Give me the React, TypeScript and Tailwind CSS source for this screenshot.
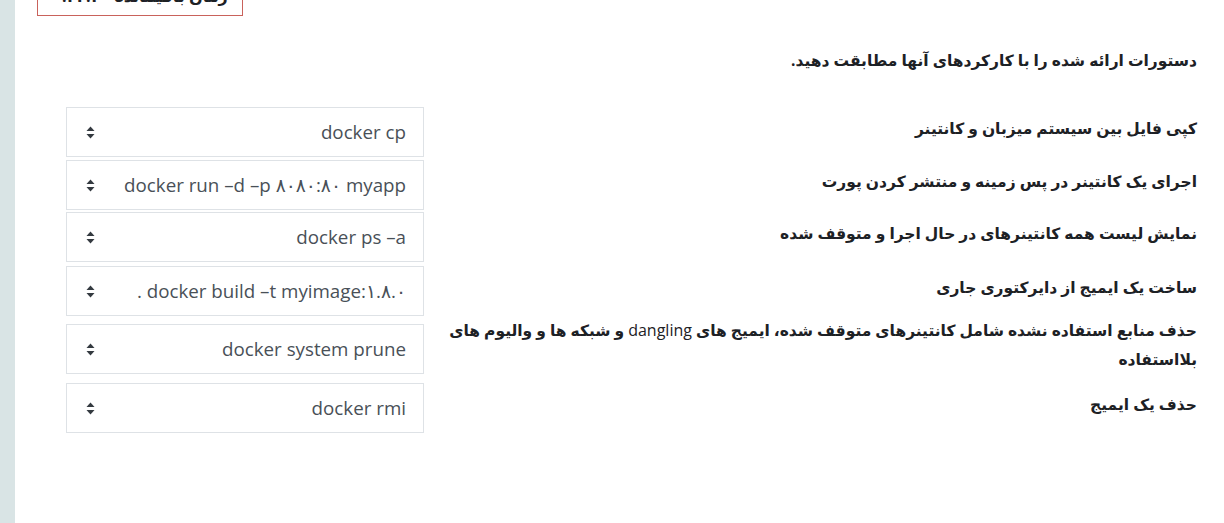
import type { ReactNode } from "react";

const rows: { label: ReactNode; value: string; h: string }[] = [
  { label: "کپی فایل بین سیستم میزبان و کانتینر", value: "docker cp", h: "h-[54px]" },
  { label: "اجرای یک کانتینر در پس زمینه و منتشر کردن پورت", value: "docker run –d –p ۸۰۸۰:۸۰ myapp", h: "h-[52px]" },
  { label: "نمایش لیست همه کانتینرهای در حال اجرا و متوقف شده", value: "docker ps –a", h: "h-[52px]" },
  { label: "ساخت یک ایمیج از دایرکتوری جاری", value: "docker build –t myimage:۱.۸.۰ .", h: "h-[56px]" },
  {
    label: (
      <>
        حذف منابع استفاده نشده شامل کانتینرهای متوقف شده، ایمیج های{" "}
        <span className="text-[16px] font-normal">dangling</span> و شبکه ها و والیوم های بلااستفاده
      </>
    ),
    value: "docker system prune",
    h: "h-[60px]",
  },
  { label: "حذف یک ایمیج", value: "docker rmi", h: "h-[58px]" },
];

function SortIcon() {
  return (
    <svg width="9" height="13" viewBox="0 0 9 13" className="shrink-0">
      <path d="M4.5 0.5 L8.5 5 H0.5 Z" fill="#343a40" />
      <path d="M4.5 12.5 L8.5 8 H0.5 Z" fill="#343a40" />
    </svg>
  );
}

function MatchRow({ label, value, h }: { label: ReactNode; value: string; h: string }) {
  return (
    <div className={`flex items-center gap-[9px] ${h}`}>
      <div className="-mt-[8px] flex-1 text-[15.5px] leading-[29px] font-bold text-[#1d2125]">{label}</div>
      <div className="flex h-[50px] w-[358px] shrink-0 items-center justify-between border border-[#dee2e6] bg-white pr-[17px] pl-[19px]">
        <span className="text-[18.75px] text-[#495057]">{value}</span>
        <SortIcon />
      </div>
    </div>
  );
}

export default function App() {
  return (
    <div
      className="flex h-[523px] overflow-hidden bg-white"
      style={{ fontFamily: '"Open Sans", "DejaVu Sans", sans-serif' }}
    >
      <div className="w-[15px] shrink-0 bg-[#d9e4e5]" />
      <div dir="rtl" className="flex-1 pr-[27px] pl-[22px]">
        <div className="flex justify-end">
          <div className="-mt-[24px] flex h-[40px] w-[206px] items-center justify-center border border-[#c9625b] text-[16px] font-bold text-[#1d2125]">
            زمان باقیمانده ۰:۴۴:۲۰
          </div>
        </div>
        <p className="mt-[32px] text-[15.5px] leading-[24px] font-bold text-[#1d2125]">
          دستورات ارائه شده را با کارکردهای آنها مطابقت دهید.
        </p>
        <div className="mt-[33px] flex flex-col pl-[29px]">
          {rows.map((r) => (
            <MatchRow key={r.value} {...r} />
          ))}
        </div>
      </div>
    </div>
  );
}
